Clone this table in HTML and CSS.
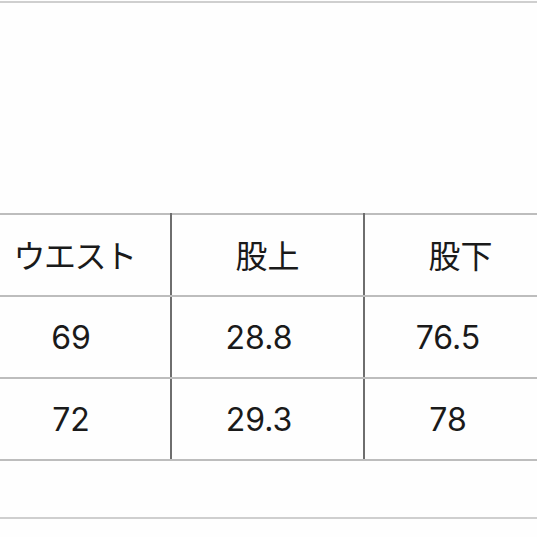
FILE: index.html
```html
<!DOCTYPE html>
<html lang="ja">
<head>
<meta charset="utf-8">
<link rel="stylesheet" href="styles.css">
</head>
<body>
<div class="page">
  <div class="top-rule"></div>
  <table class="size-table">
    <tr class="head">
      <td class="c1 kana">ウエスト</td>
      <td class="c2">股上</td>
      <td class="c3">股下</td>
    </tr>
    <tr class="num">
      <td class="c1">69</td>
      <td class="c2">28.8</td>
      <td class="c3">76.5</td>
    </tr>
    <tr class="num">
      <td class="c1">72</td>
      <td class="c2">29.3</td>
      <td class="c3">78</td>
    </tr>
  </table>
  <div class="bottom-rule"></div>
</div>
</body>
</html>
```

FILE: styles.css
```css
html, body {
  margin: 0;
  padding: 0;
  background: #fefefe;
  overflow: hidden;
}

.page {
  width: 537px;
  height: 537px;
  overflow: hidden;
  display: flex;
  flex-direction: column;
}

.top-rule {
  margin-top: 1px;
  height: 2px;
  background: #cfcfcf;
  flex: none;
}

.size-table {
  margin-top: 210px;
  margin-left: -23px;
  border-collapse: collapse;
  table-layout: fixed;
  width: 579px;
  flex: none;
  color: #1a1a1a;
}

.size-table td {
  width: 191px;
  height: 80px;
  padding: 0;
  text-align: center;
  vertical-align: middle;
  border-top: 2px solid #bdbdbd;
  border-bottom: 2px solid #bdbdbd;
  border-left: 2px solid #6e6e6e;
  border-right: 2px solid #6e6e6e;
}

.head td {
  font-family: "Noto Sans CJK JP", sans-serif;
  font-size: 32px;
  font-weight: 400;
  height: 77px;
  padding-bottom: 3px;
}

.head td.kana {
  letter-spacing: -1.5px;
}

.num td {
  font-family: "Inter", "Noto Sans CJK JP", sans-serif;
  font-size: 32px;
  font-weight: 400;
}

.num .c1 { padding-right: 7px; }
.num .c2 { padding-right: 17px; }
.num .c3 { padding-right: 25px; }

.bottom-rule {
  margin-top: 56px;
  height: 2px;
  background: #cfcfcf;
  flex: none;
}
```
